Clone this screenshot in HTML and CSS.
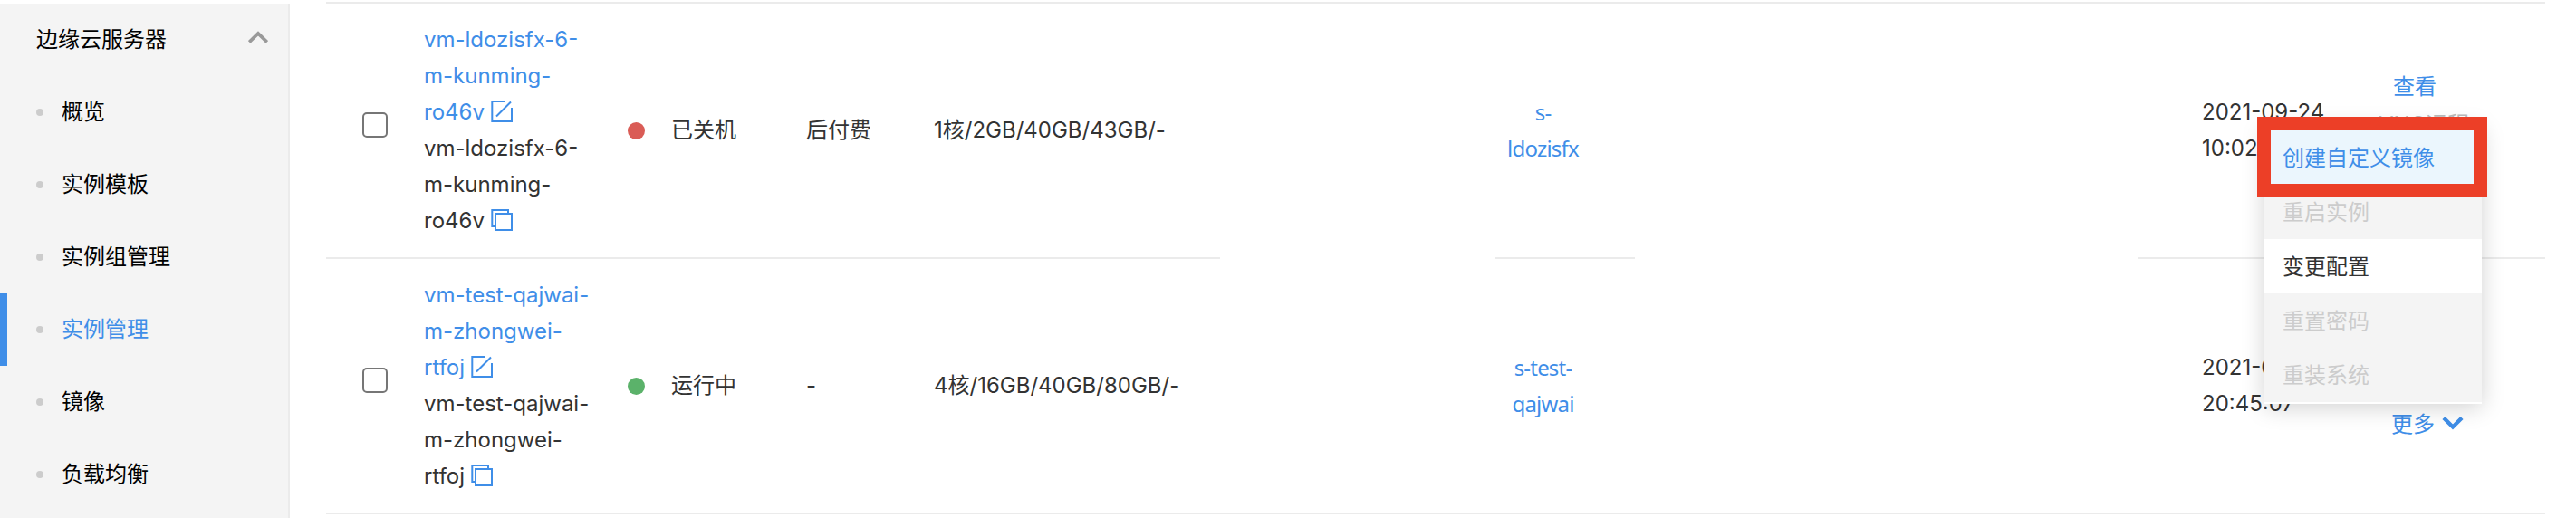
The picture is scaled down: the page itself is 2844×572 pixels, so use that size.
FILE: index.html
```html
<!DOCTYPE html>
<html lang="zh-CN">
<head>
<meta charset="utf-8">
<title>实例管理</title>
<link rel="stylesheet" href="styles.css">
</head>
<body>
<svg class="defs" width="0" height="0">
  <symbol id="edit" viewBox="0 0 26 26"><path d="M17 2H2.3V24H24V9M23 2.5L7 18.5" fill="none" stroke="currentColor" stroke-width="2"/></symbol>
  <symbol id="copy" viewBox="0 0 26 26"><path d="M5 20H2.3V2H20V5M6 6H24V24H6Z" fill="none" stroke="currentColor" stroke-width="2"/></symbol>
</svg>
<div class="page">
  <nav class="sidebar">
    <div class="group">边缘云服务器
      <svg class="caret" viewBox="0 0 22 14"><path d="M1.2 12.5L11 3L20.8 12.5" fill="none" stroke="#999" stroke-width="3.8"/></svg>
    </div>
    <a class="item">概览</a>
    <a class="item">实例模板</a>
    <a class="item">实例组管理</a>
    <a class="item active">实例管理</a>
    <a class="item">镜像</a>
    <a class="item">负载均衡</a>
  </nav>
  <main class="table">
    <div class="rule"></div>
    <div class="row">
      <div class="check"><span class="box"></span></div>
      <div class="name">
        <div class="link">vm-ldozisfx-6-<br>m-kunming-<br>ro46v<svg class="icon"><use href="#edit"/></svg></div>
        <div>vm-ldozisfx-6-<br>m-kunming-<br>ro46v<svg class="icon"><use href="#copy"/></svg></div>
      </div>
      <div class="status"><i class="dot off"></i>已关机</div>
      <div class="pay">后付费</div>
      <div class="spec">1核/2GB/40GB/43GB/-</div>
      <div class="group-id">s-<br>ldozisfx</div>
      <div class="date">2021-09-24<br>10:02:36</div>
      <div class="actions"><span class="view">查看</span><span class="disabled">VNC远程</span></div>
    </div>
    <div class="rule split"><i class="seg-a"></i><i class="seg-b"></i><i class="seg-c"></i></div>
    <div class="row">
      <div class="check"><span class="box"></span></div>
      <div class="name">
        <div class="link">vm-test-qajwai-<br>m-zhongwei-<br>rtfoj<svg class="icon"><use href="#edit"/></svg></div>
        <div>vm-test-qajwai-<br>m-zhongwei-<br>rtfoj<svg class="icon"><use href="#copy"/></svg></div>
      </div>
      <div class="status"><i class="dot on"></i>运行中</div>
      <div class="pay">-</div>
      <div class="spec">4核/16GB/40GB/80GB/-</div>
      <div class="group-id">s-test-<br>qajwai</div>
      <div class="date">2021-09-02<br>20:45:07</div>
      <div class="actions last"><span class="more">更多<svg class="down" viewBox="0 0 24 16"><path d="M2 2.5L12 12.5L22 2.5" fill="none" stroke="currentColor" stroke-width="4.4"/></svg></span></div>
    </div>
    <div class="rule"></div>
  </main>
  <div class="menu">
    <div class="option current">创建自定义镜像</div>
    <div class="option muted">重启实例</div>
    <div class="option">变更配置</div>
    <div class="option muted">重置密码</div>
    <div class="option muted">重装系统</div>
  </div>
  <div class="highlight"></div>
</div>
</body>
</html>
```
FILE: styles.css
```css
* { box-sizing: border-box; }
body {
  margin: 0;
  background: #fff;
  color: #333;
  font: 24px/40px Inter, "Noto Sans CJK SC", sans-serif;
}
.defs { position: absolute; }
.page {
  position: relative;
  display: flex;
  width: 2844px;
  height: 572px;
  overflow: hidden;
}
.sidebar {
  flex: none;
  width: 320px;
  height: 568px;
  margin-top: 4px;
  background: #f4f4f4;
  border-right: 2px solid #ebebeb;
  color: #000;
}
.group, .item { display: flex; align-items: center; height: 80px; }
.group { justify-content: space-between; padding: 0 22px 0 40px; }
.caret { width: 22px; height: 14px; margin-top: -6px; }
.item { padding-left: 40px; }
.item::before {
  content: "";
  width: 8px;
  height: 8px;
  margin-right: 20px;
  border-radius: 50%;
  background: #ccc;
}
.active { padding-left: 32px; border-left: 8px solid #3f8ee8; color: #3f8ee8; }
.table { width: 2450px; margin: 2px 0 0 40px; }
.rule { height: 2px; background: #ebebeb; }
.split { display: flex; background: none; }
.split i { background: #ebebeb; }
.seg-a { width: 987px; }
.seg-b { width: 155px; margin-left: 303px; }
.seg-c { width: 450px; margin-left: auto; }
.row {
  display: grid;
  grid-template-columns: 108px 225px 197px 141px 595px 155px 650px 195px 184px;
  grid-template-rows: 280px;
  height: 280px;
  align-items: center;
}
.check { padding-left: 40px; height: 40px; }
.box {
  display: block;
  width: 28px;
  height: 28px;
  border: 2px solid #767676;
  border-radius: 5px;
}
.link { color: #3f8ee8; }
.name > div { height: 120px; }
.icon { width: 26px; height: 26px; margin-left: 6px; vertical-align: -4px; color: #3f8ee8; }
.name, .date, .spec { white-space: nowrap; }
.status { display: flex; align-items: center; }
.dot { width: 19px; height: 19px; margin-right: 29px; border-radius: 50%; }
.off { background: #da5c56; }
.on { background: #5bb26a; }
.group-id {
  color: #3f8ee8;
  text-align: center;
  font-family: "Noto Sans", sans-serif;
  letter-spacing: -.8px;
}
.date { grid-column: 8; }
.actions {
  display: flex;
  flex-direction: column;
  grid-column: 9;
  align-self: start;
  gap: 2px;
  padding-top: 72px;
  color: #3f8ee8;
}
.view { padding-left: 16px; }
.disabled { color: #bbb; }
.last { padding-top: 163px; }
.more { display: flex; align-items: center; padding-left: 14px; }
.down { width: 24px; height: 16px; margin: -5px 0 0 8px; }
.menu {
  position: absolute;
  left: 2500px;
  top: 138px;
  width: 240px;
  height: 308px;
  padding-top: 6px;
  background: #fff;
  box-shadow: 0 4px 24px rgba(0, 0, 0, .18);
}
.option { height: 60px; padding-left: 20px; line-height: 62px; }
.current { background: #ebf6fd; color: #3f8ee8; }
.muted { background: #f4f4f4; color: #ccc; }
.highlight {
  position: absolute;
  left: 2492px;
  top: 129px;
  width: 254px;
  height: 89px;
  border: 15px solid #ec3f27;
}
```
